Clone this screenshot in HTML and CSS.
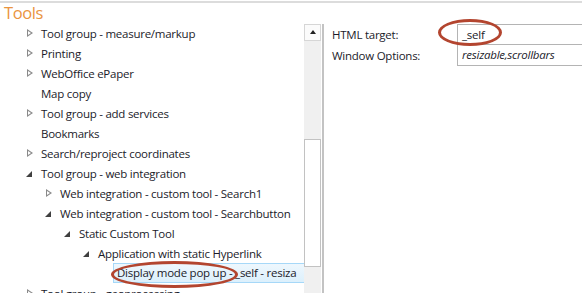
FILE: index.html
```html
<!DOCTYPE html>
<html lang="en">
<head>
    <meta charset="UTF-8">
    <title>Tools</title>
    <link rel="stylesheet" href="styles.css">
</head>
<body>
    <div class="topline"></div>
    <h1 class="title">Tools</h1>
    <div class="main">
        <div class="tree-pane">
            <ul class="tree">
                <li class="node lvl-0"><span class="exp closed"></span>Tool group - measure/markup</li>
                <li class="node lvl-0"><span class="exp closed"></span>Printing</li>
                <li class="node lvl-0"><span class="exp closed"></span>WebOffice ePaper</li>
                <li class="node lvl-0"><span class="exp"></span>Map copy</li>
                <li class="node lvl-0"><span class="exp closed"></span>Tool group - add services</li>
                <li class="node lvl-0"><span class="exp"></span>Bookmarks</li>
                <li class="node lvl-0"><span class="exp closed"></span>Search/reproject coordinates</li>
                <li class="node lvl-0"><span class="exp open"></span>Tool group - web integration</li>
                <li class="node lvl-1"><span class="exp closed"></span>Web integration - custom tool - Search1</li>
                <li class="node lvl-1"><span class="exp open"></span>Web integration - custom tool - Searchbutton</li>
                <li class="node lvl-2"><span class="exp open"></span>Static Custom Tool</li>
                <li class="node lvl-3"><span class="exp open"></span>Application with static Hyperlink</li>
                <li class="node lvl-4 selected"><span class="sel-label">Display mode pop up - _self - resiza</span></li>
                <li class="node lvl-0"><span class="exp closed"></span>Tool group - geoprocessing</li>
            </ul>
            <div class="scrollbar">
                <div class="scroll-btn"></div>
                <div class="scroll-track">
                    <div class="scroll-thumb"></div>
                </div>
            </div>
        </div>
        <div class="props">
            <div class="prop-row">
                <div class="prop-label">HTML target:</div>
                <div class="prop-value">_self</div>
            </div>
            <div class="prop-row">
                <div class="prop-label">Window Options:</div>
                <div class="prop-value italic">resizable,scrollbars</div>
            </div>
        </div>
    </div>

    <!-- red markers drawn over the screenshot -->
    <div class="mark mark-target"></div>
    <div class="mark mark-node"></div>
</body>
</html>
```

FILE: styles.css
```css
:root {
    --text: #1b1b2a;
    --orange: #ea9440;
    --mark: #b3452f;
    --line: #c3c3c3;
}

body {
    margin: 0;
    background: white;
    font-family: 'Open Sans', 'Noto Sans', sans-serif;
    font-size: 11.5px;
    letter-spacing: -0.25px;
    color: var(--text);
    overflow: hidden;
    height: 293px;
}

.topline {
    margin-top: 1px;
    height: 2px;
    background: #dcdcdc;
}

.title {
    margin: 0;
    padding-left: 4px;
    height: 20px;
    line-height: 20px;
    font-size: 16.5px;
    letter-spacing: -0.4px;
    font-weight: 400;
    color: var(--orange);
}

.main {
    display: flex;
}

.tree-pane {
    display: flex;
    width: 322px;
    border-right: 2px solid var(--line);
    height: 270px;
    margin-top: 1px;
}

.tree {
    list-style: none;
    margin: 0;
    padding: 0;
    width: 304px;
    overflow: hidden;
}

.node {
    display: flex;
    align-items: center;
    height: 20px;
    white-space: nowrap;
    padding-left: 22px;
}

.node:first-child {
    margin-top: -1px;
}

.lvl-1 { padding-left: 41px; }
.lvl-2 { padding-left: 60px; }
.lvl-3 { padding-left: 79px; }
.lvl-4 { padding-left: 113px; }

.exp {
    flex: none;
    width: 19px;
    height: 20px;
    position: relative;
}

.exp.closed::before {
    content: "";
    position: absolute;
    left: 5px;
    top: 6px;
    border-left: 6px solid #8a8a8a;
    border-top: 4.5px solid transparent;
    border-bottom: 4.5px solid transparent;
}

.exp.closed::after {
    content: "";
    position: absolute;
    left: 6px;
    top: 8px;
    border-left: 3px solid white;
    border-top: 2.5px solid transparent;
    border-bottom: 2.5px solid transparent;
}

.exp.open::before {
    content: "";
    position: absolute;
    left: 4px;
    top: 8px;
    border-right: 6px solid #404040;
    border-top: 6px solid transparent;
}

.sel-label {
    flex: 1;
    height: 18px;
    line-height: 18px;
    padding-left: 3px;
    border: 1px solid #a6d8f8;
    border-right: none;
    background: linear-gradient(#eef7fd, #dcf0fc);
    overflow: hidden;
}

.scrollbar {
    width: 17px;
    background: #f0f0f0;
    display: flex;
    flex-direction: column;
}

.scroll-btn {
    height: 15px;
    border: 1px solid #d6d6d6;
    background: #fbfbfb;
    position: relative;
}

.scroll-btn::before {
    content: "";
    position: absolute;
    left: 5px;
    top: 5px;
    border-bottom: 4px solid #202020;
    border-left: 3.5px solid transparent;
    border-right: 3.5px solid transparent;
}

.scroll-track {
    flex: 1;
    padding-top: 98px;
}

.scroll-thumb {
    height: 126px;
    border: 1px solid #c2c2c2;
    background: white;
}

.props {
    flex: 1;
    padding-left: 8px;
    padding-top: 1px;
}

.prop-row {
    display: flex;
    height: 21px;
}

.prop-label {
    width: 125px;
    line-height: 22px;
}

.prop-value {
    flex: 1;
    border: 1px solid #b4b4b4;
    border-right: none;
    padding-left: 4px;
    line-height: 19px;
}

.prop-row + .prop-row .prop-value {
    border-top: none;
}

.italic {
    font-style: italic;
}

.mark {
    position: absolute;
    border: 3px solid var(--mark);
    border-radius: 50%;
    box-sizing: border-box;
}

.mark-target {
    left: 438px;
    top: 19px;
    width: 64px;
    height: 27px;
}

.mark-node {
    left: 111px;
    top: 261px;
    width: 127px;
    height: 27px;
}
```
